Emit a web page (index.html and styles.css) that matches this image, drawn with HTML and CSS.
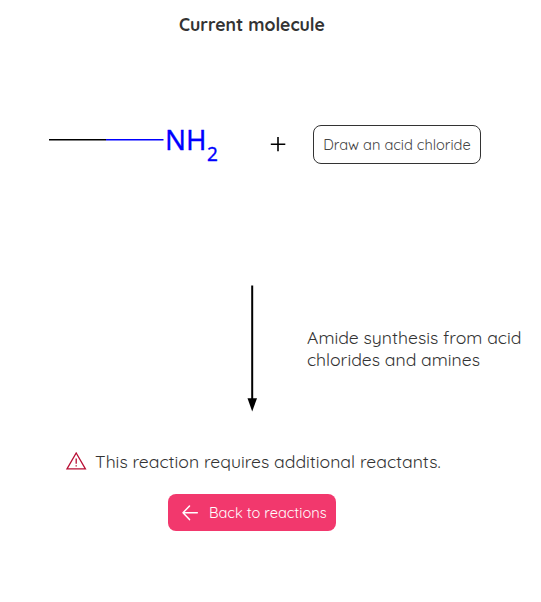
FILE: index.html
```html
<!DOCTYPE html>
<html lang="en">
<head>
<meta charset="utf-8">
<title>Current molecule</title>
<link rel="stylesheet" href="styles.css">
</head>
<body>
<main class="panel">
  <h1 class="title"><span>Current molecule</span></h1>
  <section class="reactants">
    <svg class="molecule" width="190" height="60" viewBox="0 0 190 60">
      <path d="M9 24.7H66" stroke="#000" stroke-width="1.5"/>
      <path d="M66 24.7H123.5" stroke="#00f" stroke-width="1.5"/>
      <text class="atom" x="125" y="35" textLength="41.5" lengthAdjust="spacingAndGlyphs">NH</text>
      <text class="atom count" x="167" y="45.5">2</text>
    </svg>
    <svg class="plus" width="16" height="16" viewBox="0 0 16 16"><path d="M.8 8.2H15.3M8 1V15.3" stroke="#000" stroke-width="1.6"/></svg>
    <button class="draw"><span>Draw an acid chloride</span></button>
  </section>
  <section class="reaction">
    <svg class="arrow" width="12" height="128" viewBox="0 0 12 128"><path d="M6.2 .5V115" stroke="#000" stroke-width="2"/><path d="M1.5 113.2H11L6.2 126.4Z"/></svg>
    <p class="name"><span>Amide synthesis from acid</span><br><span>chlorides and amines</span></p>
  </section>
  <section class="notice">
    <svg width="22" height="20" viewBox="0 0 22 20" fill="none" stroke="#b80f35" stroke-width="1.3"><path d="M11.2 1L20.4 16.8H2Z"/><path d="M11.2 6.5V11.8M11.2 13.2V14.5"/></svg>
    <span class="message">This reaction requires additional reactants.</span>
  </section>
  <button class="back">
    <svg width="18" height="18" viewBox="0 0 18 18" fill="none" stroke="#fff" stroke-width="1.5" stroke-linecap="round" stroke-linejoin="round"><path d="M16.3 8.8H2M8.5 2L2 8.8L8.5 15.6"/></svg>
    <span>Back to reactions</span>
  </button>
</main>
</body>
</html>
```
FILE: styles.css
```css
* { box-sizing: border-box; }
body { margin: 0; background: #fff; color: #333; font-family: Quicksand, Lato, sans-serif; }
.panel { height: 602px; overflow: hidden; display: flex; flex-direction: column; }
.title { margin: 13px 0 1px 179px; font-size: 17.6px; line-height: 22px; font-weight: 700; }
.reactants { display: flex; height: 60px; margin: 79px 0 0 40px; }
.molecule { flex: none; }
.atom { font-family: "Noto Sans", sans-serif; font-size: 28px; fill: #00f; stroke: #00f; stroke-width: .3px; }
.count { font-size: 19px; }
.plus { flex: none; margin: 21px 0 0 40px; }
.draw { width: 168px; height: 39px; margin: 10px 0 0 27px; padding: 0; border: 1px solid #333; border-radius: 8px; background: #fff; color: #444; font: 400 14.65px/20px Quicksand, Lato, sans-serif; white-space: nowrap; }
.reaction { display: flex; height: 128px; margin: 110px 0 0 246px; }
.arrow { flex: none; }
.name { margin: 41px 0 0 49px; font-size: 17.6px; line-height: 22px; white-space: nowrap; }
.notice { display: flex; align-items: center; margin: 37px 0 0 65px; height: 24px; gap: 8px; }
.message { margin-top: -2px; font-size: 17.6px; line-height: 24px; white-space: nowrap; }
.back { display: flex; align-items: center; gap: 10px; width: 168px; height: 37px; margin: 20px 0 0 168px; padding: 0 0 0 13px; border: 0; border-radius: 8px; background: #f2386d; color: #fff; font: 400 14.6px/20px Quicksand, Lato, sans-serif; white-space: nowrap; }
```
